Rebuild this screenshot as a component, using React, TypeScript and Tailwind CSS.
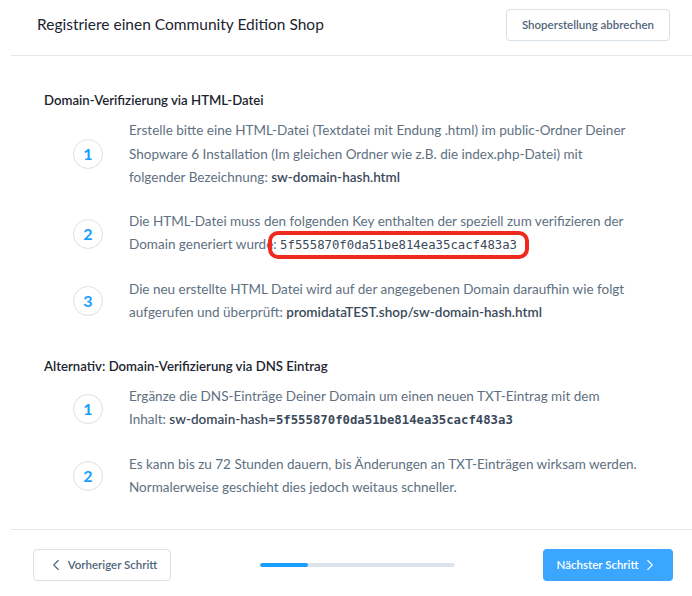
import React from "react";
import { ChevronLeft, ChevronRight } from "lucide-react";

const KEY = "5f555870f0da51be814ea35cacf483a3";

function StepCircle({ n }: { n: number }) {
  return (
    <div className="w-[30px] h-[30px] shrink-0 rounded-full border border-[#d9e1e8] flex items-center justify-center text-[#189eff] text-[16px] font-bold">
      {n}
    </div>
  );
}

function Step({ n, children }: { n: number; children: React.ReactNode }) {
  return (
    <div className="flex items-center pl-[29px]">
      <StepCircle n={n} />
      <p className="ml-[26px] text-[13.5px] leading-[23.5px] text-[#5e7081]">{children}</p>
    </div>
  );
}

export default function App() {
  return (
    <div className="w-[692px] h-[596px] bg-white pl-[11px] font-['Lato',sans-serif] overflow-hidden">
      {/* Header */}
      <div className="h-[56px] pb-[6px] flex items-center justify-between pl-[26px] pr-[22px] border-b border-[#e3e8ee]">
        <h1 className="text-[15.5px] text-[#1c2530]">Registriere einen Community Edition Shop</h1>
        <button className="h-[32px] px-[15px] rounded-[4px] border border-[#d9e1e8] bg-white text-[11.5px] text-[#52667a] font-semibold">
          Shoperstellung abbrechen
        </button>
      </div>

      {/* Body */}
      <div className="pl-[33px] pt-[35px] pb-[29px]">
        <h2 className="text-[13.2px] leading-[18px] font-semibold text-[#1c2530]">Domain-Verifizierung via HTML-Datei</h2>
        <div className="mt-[10px] flex flex-col gap-[20px]">
          <Step n={1}>
            Erstelle bitte eine HTML-Datei (Textdatei mit Endung .html) im public-Ordner Deiner
            <br />
            Shopware 6 Installation (Im gleichen Ordner wie z.B. die index.php-Datei) mit
            <br />
            folgender Bezeichnung: <span className="font-semibold text-[#3b4a5a]">sw-domain-hash.html</span>
          </Step>
          <Step n={2}>
            Die HTML-Datei muss den folgenden Key enthalten der speziell zum verifizieren der
            <br />
            Domain generiert wurde:{" "}
            <span className="relative font-['DejaVu_Sans_Mono',monospace] text-[12.3px] text-[#3b4a5a]">
              {KEY}
              <span className="absolute left-[-12px] right-[-12px] top-[-7px] bottom-[-7px] border-[4px] border-[#ee2a1e] rounded-[10px]" />
            </span>
          </Step>
          <Step n={3}>
            Die neu erstellte HTML Datei wird auf der angegebenen Domain daraufhin wie folgt
            <br />
            aufgerufen und überprüft: <span className="font-semibold text-[#3b4a5a]">promidataTEST.shop/sw-domain-hash.html</span>
          </Step>
        </div>

        <h2 className="mt-[32px] text-[13.2px] leading-[18px] font-semibold text-[#1c2530]">
          Alternativ: Domain-Verifizierung via DNS Eintrag
        </h2>
        <div className="mt-[10px] flex flex-col gap-[20px]">
          <Step n={1}>
            Ergänze die DNS-Einträge Deiner Domain um einen neuen TXT-Eintrag mit dem
            <br />
            Inhalt:{" "}
            <span className="font-semibold text-[#3b4a5a]">
              sw-domain-hash=<span className="font-['DejaVu_Sans_Mono',monospace] text-[12.3px]">{KEY}</span>
            </span>
          </Step>
          <Step n={2}>
            Es kann bis zu 72 Stunden dauern, bis Änderungen an TXT-Einträgen wirksam werden.
            <br />
            Normalerweise geschieht dies jedoch weitaus schneller.
          </Step>
        </div>
      </div>

      {/* Footer */}
      <div className="border-t border-[#e3e8ee] pt-[19px] pl-[22px] pr-[19px] flex items-center justify-between">
        <button className="h-[32px] w-[138px] rounded-[4px] border border-[#d9e1e8] bg-white flex items-center justify-center gap-[3px] text-[11.5px] text-[#52667a] font-semibold">
          <ChevronLeft size={18} strokeWidth={1.5} />
          Vorheriger Schritt
        </button>
        <div className="w-[195px] h-[4px] rounded-full bg-[#dde3ea] overflow-hidden">
          <div className="w-[48px] h-full bg-[#189eff] rounded-full" />
        </div>
        <button className="h-[32px] w-[130px] rounded-[4px] bg-[#3aa6ff] flex items-center justify-center gap-[3px] text-[11.5px] text-white font-semibold">
          Nächster Schritt
          <ChevronRight size={18} strokeWidth={1.5} />
        </button>
      </div>
    </div>
  );
}
